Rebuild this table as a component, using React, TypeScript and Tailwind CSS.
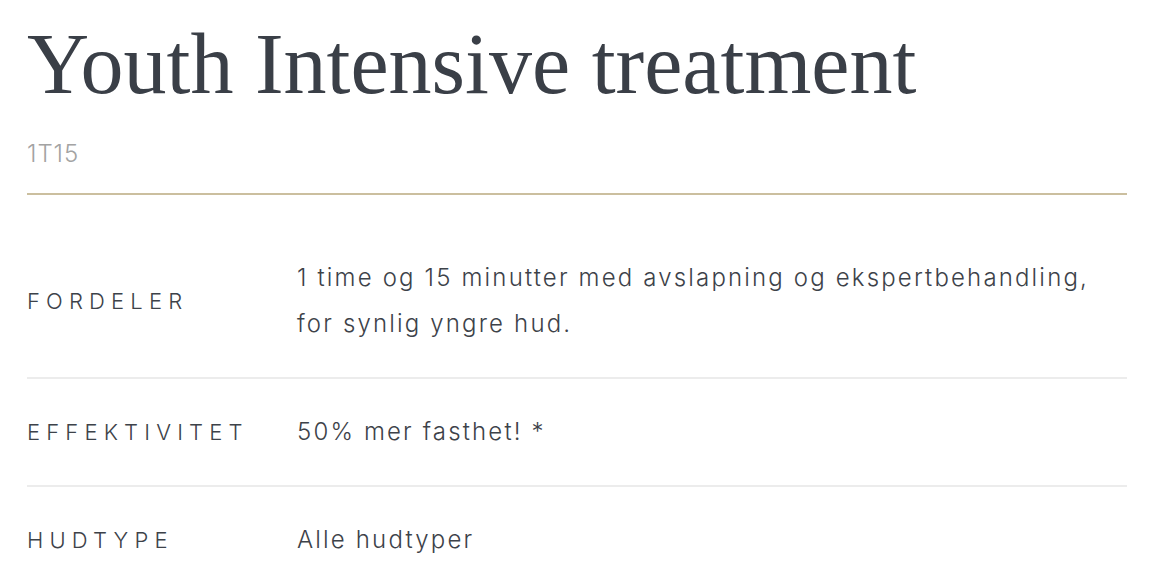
const rows = [
  {
    label: 'FORDELER',
    value: '1 time og 15 minutter med avslapning og ekspertbehandling, for synlig yngre hud.',
  },
  { label: 'EFFEKTIVITET', value: '50% mer fasthet! *' },
  { label: 'HUDTYPE', value: 'Alle hudtyper' },
];

export default function App() {
  return (
    <div className="min-h-screen bg-white pl-[27px] pr-[33px] text-[#3d4249]">
      <h1 className="pt-[14px] font-['Liberation_Serif',serif] text-[86px] leading-[100px] text-[#3a3f47]">
        Youth Intensive treatment
      </h1>
      <div className="mt-[25px] font-['Inter',sans-serif] text-[24px] font-light leading-[30px] tracking-[0.04em] text-[#a3a3a3]">
        1T15
      </div>
      <div className="mt-[24px] h-[2px] bg-[#cbbf9f]" />

      <div className="mt-[30px] font-['Inter',sans-serif]">
        {rows.map((row, i) => (
          <div
            key={row.label}
            className={`flex items-center py-[30px] ${i < rows.length - 1 ? 'border-b-2 border-[#ececec]' : ''}`}
          >
            <div className="w-[270px] shrink-0 text-[22px] font-light tracking-[0.28em] text-[#3d4249]">
              {row.label}
            </div>
            <div className="text-[24px] font-light leading-[46px] tracking-[0.09em] text-[#3d4249]">
              {row.value}
            </div>
          </div>
        ))}
      </div>
    </div>
  );
}
